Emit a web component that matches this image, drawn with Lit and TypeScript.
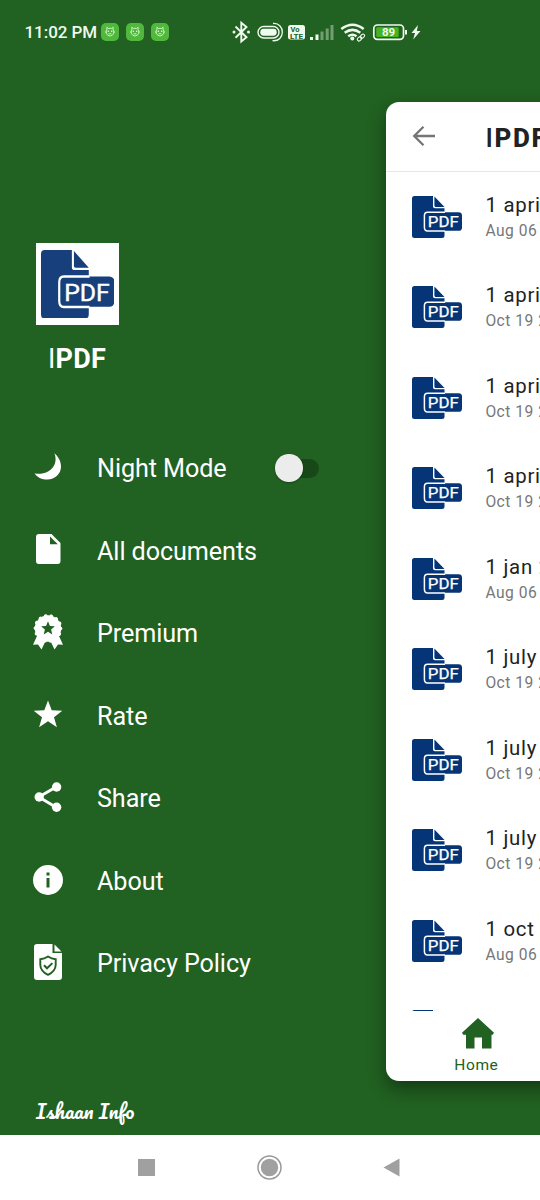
import { LitElement, html, css, svg, nothing } from "lit";
import { customElement, property, state } from "lit/decorators.js";

@customElement("pdf-icon")
class PdfIcon extends LitElement {
  static styles = css`
    :host { display: block; color: #053577; }
    svg { display: block; width: 100%; height: 100%; }
    .label { font: 400 14.5px Roboto, sans-serif; }
  `;
  render() {
    return html`<svg viewBox="0 0 50 42" preserveAspectRatio="none">
      <path fill="currentColor" d="M2.5 0H21V10.5Q21 12.3 23 12.3H32.5V39.5Q32.5 42 30 42H2.5Q0 42 0 39.5V2.5Q0 0 2.5 0ZM22.4 .6L32.5 10.9H23.6Q22.4 10.9 22.4 9.8Z"/>
      <rect x="12.4" y="16.2" width="37.6" height="18.6" rx="3.4" fill="currentColor"/>
      <path fill="none" stroke="#fff" stroke-width="1.5" d="M33 16.2H15.5Q12.4 16.2 12.4 19.8V31.2Q12.4 34.9 15.5 34.9H33"/>
      <text class="label" x="15.8" y="31" textLength="31" lengthAdjust="spacingAndGlyphs" fill="#fff" stroke="#fff" stroke-width=".25">PDF</text>
    </svg>`;
  }
}

const star = "M12 1.6l2.75 7.4 7.85.3-6.15 4.9 2.15 7.6L12 17.4l-6.6 4.4 2.15-7.6L1.4 9.3l7.85-.3z";

const icons: Record<string, unknown> = {
  moon: svg`<path d="M21.4 1.3C24 3.6 28 8 28 14.6C28 22 22 27.6 14.4 27.6C8.6 27.6 4 25.2 1.6 21.2C4 22 7 22 10.4 21.2C18 19.4 22.6 13.6 22.6 7.2C22.6 5 22.2 3 21.4 1.3Z"/>`,
  doc: svg`<path fill-rule="evenodd" d="M6 0H18.5L27.500 9V27Q27.500 30 24.700 30H5.8Q3 30 3 27V3Q3 0 6 0ZM17 2.4V10.2H24.8Z"/>`,
  award: svg`<path d="M4 22L0 30.800l5-.3L8.500 35.500 13 26h4l4.500 9.500 3.500-5 5 .3L26 22z"/>
    <circle cx="15" cy="14.500" r="13.200"/>
    <circle cx="15" cy="14.500" r="12.600" fill="none" stroke="#fff" stroke-width="3.600" stroke-linecap="round" stroke-dasharray=".1 5.555"/>
    <path fill="#216121" d="M15 7.300l1.900 4.600 5 .4-3.800 3.200 1.200 4.900L15 17.800l-4.300 2.600 1.200-4.900-3.800-3.200 5-.4z"/>`,
  star: svg`<g transform="translate(-1.200 -.6) scale(1.350 1.320)"><path d="${star}"/></g>`,
  share: svg`<path d="M23.500 4.800L5.800 15 23.500 25.400" fill="none" stroke="#fff" stroke-width="2.900"/>
    <circle cx="23.600" cy="5" r="4.700"/><circle cx="6.200" cy="15" r="4.700"/><circle cx="23.600" cy="25.200" r="4.700"/>`,
  info: svg`<path fill-rule="evenodd" d="M15 0a15 15 0 1 1 0 30a15 15 0 1 1 0-30ZM13.500 7.500v3h3v-3ZM13.500 13v9.500h3V13Z"/>`,
  privacy: svg`<path d="M5 0H19.500V9H29V33Q29 36 26 36H4Q1 36 1 33V3Q1 0 4 0Z"/><path d="M21.500 .5L28.500 7.500H21.500Z"/>
    <path d="M15 12.500Q18.500 14.800 22.700 15.200V21Q22.400 27.500 15 30.800Q7.600 27.500 7.300 21V15.200Q11.500 14.800 15 12.500Z" fill="none" stroke="#216121" stroke-width="1.900"/>
    <path d="M11 21.300l3 3 5.400-5.200" fill="none" stroke="#216121" stroke-width="2"/>`,
};

interface Entry { icon: string; label: string; h: number; toggle?: boolean; }

@customElement("drawer-menu")
class DrawerMenu extends LitElement {
  @state() private night = false;
  @property({ attribute: false }) entries: Entry[] = [
    { icon: "moon", label: "Night Mode", h: 30, toggle: true },
    { icon: "doc", label: "All documents", h: 30 },
    { icon: "award", label: "Premium", h: 36 },
    { icon: "star", label: "Rate", h: 30 },
    { icon: "share", label: "Share", h: 30 },
    { icon: "info", label: "About", h: 30 },
    { icon: "privacy", label: "Privacy Policy", h: 36 },
  ];
  static styles = css`
    :host { display: flex; flex-direction: column; width: 386px; box-sizing: border-box; padding-top: 178.500px; color: #fff; }
    .logo { width: 82.500px; height: 82.500px; box-sizing: border-box; margin-left: 36px; padding: 7px 4px 7px 4.500px; background: #fff; }
    .logo pdf-icon { width: 73.500px; height: 68.500px; color: #173f7c; }
    .brand { margin: 18px 0 0 48px; font-size: 27px; line-height: 32px; font-weight: 700; letter-spacing: .2px; }
    .thin { font-weight: 400; }
    .menu { display: flex; flex-direction: column; margin-top: 52.800px; }
    .row { display: grid; grid-template-columns: 30px 144px auto; column-gap: 34px; align-items: center; justify-content: start; height: 82.550px; padding-left: 33px; }
    .icon { display: block; width: 30px; overflow: visible; fill: #fff; margin-bottom: 4.600px; }
    .text { font-size: 25.200px; line-height: 32px; letter-spacing: -.09px; white-space: nowrap; }
    .track { display: flex; align-items: center; width: 43.500px; height: 19px; margin-top: -2px; border-radius: 10px; background: #184817; }
    .knob { width: 27.500px; height: 27.500px; flex: none; border-radius: 50%; background: #ececec; box-shadow: 0 1px 2px #0004; }
    .on { justify-content: flex-end; }
    .author { margin: 90px 0 0 36px; font: 400 20px/30px Pacifico, cursive; white-space: nowrap; }
  `;
  render() {
    return html`
      <div class="logo"><pdf-icon></pdf-icon></div>
      <div class="brand"><span class="thin">I</span>PDF</div>
      <nav class="menu">${this.entries.map((e) => html`
        <div class="row">
          <svg class="icon" height=${e.h} viewBox="0 0 30 ${e.h}">${icons[e.icon]}</svg>
          <span class="text">${e.label}</span>
          ${e.toggle ? html`<span class="track ${this.night ? "on" : ""}" @click=${() => (this.night = !this.night)}><span class="knob"></span></span>` : nothing}
        </div>`)}</nav>
      <div class="author">Ishaan Info</div>`;
  }
}

@customElement("file-panel")
class FilePanel extends LitElement {
  @property({ attribute: false }) files = [
    ["1 april", "Aug 06 2"], ["1 april", "Oct 19 2"], ["1 april", "Oct 19 2"], ["1 april", "Oct 19 2"],
    ["1 jan 2", "Aug 06 2"], ["1 july 2", "Oct 19 2"], ["1 july 2", "Oct 19 2"], ["1 july 2", "Oct 19 2"],
    ["1 oct 2", "Aug 06 2"], ["", ""],
  ];
  static styles = css`
    :host { display: flex; flex-direction: column; width: 400px; height: 978.500px; margin-top: 38px; flex: none; overflow: hidden; background: #fff; border-radius: 13px; box-shadow: 0 8px 18px #0006; }
    .head { display: flex; align-items: center; gap: 49px; height: 69px; flex: none; padding-left: 26px; border-bottom: 1.500px solid #e7e7e7; box-sizing: content-box; }
    .head svg { width: 24px; height: 22px; margin-top: -2px; }
    .title { margin-top: 3px; font-size: 26px; font-weight: 800; letter-spacing: 1.700px; color: #222; }
    .medium { font-weight: 500; }
    .list { height: 838.500px; flex: none; overflow: hidden; }
    .file { display: flex; align-items: center; gap: 23.500px; height: 90.500px; padding-left: 25.500px; }
    .file pdf-icon { width: 50px; height: 42px; flex: none; margin-bottom: 1.400px; }
    .names { display: flex; flex-direction: column; margin-top: .5px; white-space: nowrap; }
    .name { font-size: 20.400px; line-height: 26px; letter-spacing: .75px; color: #222; min-height: 26px; }
    .date { font-size: 15.600px; line-height: 26px; letter-spacing: .5px; color: #777; min-height: 26px; }
    .home { display: flex; flex-direction: column; align-items: center; width: 180px; padding-top: 7px; color: #216121; font-size: 15.500px; line-height: 20px; letter-spacing: .6px; }
    .home svg { width: 32px; height: 31px; margin: 0 0 6.500px 3px; }
  `;
  render() {
    return html`
      <header class="head">
        <svg viewBox="0 0 24 22" fill="none" stroke="#757575" stroke-width="2.300"><path d="M23 11H2.500M11.500 1.700L2.200 11l9.300 9.300"/></svg>
        <span class="title"><span class="medium">I</span>PDF</span>
      </header>
      <div class="list">${this.files.map(([n, d]) => html`
        <div class="file"><pdf-icon></pdf-icon><div class="names"><span class="name">${n}</span><span class="date">${d}</span></div></div>`)}
      </div>
      <div class="home">
        <svg viewBox="0 0 32 31" fill="currentColor"><path d="M16 0L32 14.800L30.800 16.800H29.500V30.500H20V19.500H12.500V30.500H4V16.800H1.200L0 14.800Z"/></svg>
        Home
      </div>`;
  }
}

@customElement("status-bar")
class StatusBar extends LitElement {
  static styles = css`
    :host { display: flex; align-items: center; height: 64px; padding-left: 24.500px; color: #f1faef; font-size: 17px; font-weight: 500; }
    .clock { width: 76px; white-space: nowrap; letter-spacing: -.05px; }
    svg { display: block; flex: none; }
    .app { width: 18px; height: 18px; margin-right: 7px; }
    .system { width: 190px; height: 24px; margin-left: 56px; }
    .volte { font: 700 7.500px Roboto, sans-serif; }
    .level { font: 700 11.500px Roboto, sans-serif; }
  `;
  render() {
    const app = html`<svg class="app" viewBox="0 0 18 18"><rect width="18" height="18" rx="5" fill="#4fb83d"/>
      <g fill="none" stroke="#d9f8cc" stroke-width=".9"><path d="M6 6.200L5.800 4.300 7.500 5.500Q9 5 10.500 5.500L12.200 4.300 12 6.200Q13.200 8 12.700 10.300Q11.500 13 9 13Q6.500 13 5.300 10.300Q4.800 8 6 6.200ZM5 9H4M13 9H14M7.500 10.800h3"/></g><circle cx="7.300" cy="8.300" r=".8" fill="#e6ffdc"/><circle cx="10.700" cy="8.300" r=".8" fill="#e6ffdc"/></svg>`;
    return html`<span class="clock">11:02 PM</span>${app}${app}${app}
      <svg class="system" viewBox="232 20 190 24" fill="none" stroke="#f1faef">
        <path d="M235.500 26.500L246.500 37.200 241.300 41.500V22.700L246.500 27 235.500 37.700" stroke-width="1.900"/>
        <circle cx="234" cy="32" r="1.500" fill="#f1faef" stroke="none"/><circle cx="248.500" cy="32" r="1.500" fill="#f1faef" stroke="none"/>
        <rect x="258" y="26.500" width="21" height="11.500" rx="5.700" stroke-width="1.400"/><rect x="260.300" y="28.800" width="16.400" height="6.900" rx="3.400" fill="#f1faef" stroke="none"/>
        <path d="M273 23.500C285.500 22.500 285.500 42 272.500 40.700" stroke-width="1.300"/>
        <rect x="288" y="25" width="17" height="14.500" rx="2.500" fill="#f1faef" stroke="none"/>
        <g stroke="none" fill="#216121"><text class="volte" x="290.500" y="31.500">Vo</text><text class="volte" x="290" y="38.500" textLength="13" lengthAdjust="spacingAndGlyphs">LTE</text></g>
        <g stroke-width="3"><path d="M311.500 37V40M317 34.500V40"/><path d="M322 31.500V40M327.200 28.500V40M332 25V40" opacity=".4"/></g>
        <g stroke-width="2.500"><path d="M341.300 29Q352.500 20.500 363.700 29"/><path d="M344.700 32.800Q352.500 27 360.300 32.800"/><path d="M348.200 36.300Q352.500 33.200 356.500 36.300"/></g>
        <circle cx="352.300" cy="38.500" r="2" fill="#f1faef" stroke="none"/>
        <g stroke-width="1.100" transform="rotate(-42 361 37.500)"><rect x="356.600" y="35.900" width="4.800" height="3.200" rx="1.600"/><rect x="360.500" y="35.900" width="4.800" height="3.200" rx="1.600"/></g>
        <rect x="373.800" y="25" width="29.700" height="14.300" rx="3.500" stroke-width="1.700"/>
        <rect x="376.200" y="27.300" width="22.500" height="9.700" rx="1.200" fill="#45b51e" stroke="none"/>
        <path d="M406 30V34.500" stroke-width="2"/>
        <text class="level" x="382" y="36.400" textLength="13" fill="#f1faef" stroke="none">89</text>
        <path d="M418 25L411.500 33H415L413.200 39.500 420.500 31H416.800Z" fill="#f1faef" stroke="none"/>
      </svg>`;
  }
}

@customElement("app-root")
class AppRoot extends LitElement {
  static styles = css`
    :host { display: flex; flex-direction: column; width: 540px; height: 1200px; overflow: hidden; background: #216121; font-family: Roboto, sans-serif; }
    .main { display: flex; height: 1071px; flex: none; overflow: hidden; }
    drawer-menu { flex: none; }
    file-panel { margin-left: .4px; }
    .nav { display: grid; grid-template-columns: 17px 25px 17px; justify-content: start; align-items: center; column-gap: 102px; height: 65px; flex: none; padding-left: 138px; background: #fff; }
    .nav svg { display: block; overflow: visible; }
  `;
  render() {
    return html`<status-bar></status-bar>
      <div class="main"><drawer-menu></drawer-menu><file-panel></file-panel></div>
      <div class="nav">
        <svg width="17" height="17" fill="#a0a0a0"><rect width="17" height="17"/></svg>
        <svg width="25" height="25" viewBox="0 0 25 25"><circle cx="12.500" cy="12.500" r="11.500" fill="none" stroke="#999" stroke-width="1.500"/><circle cx="12.500" cy="12.500" r="8.700" fill="#a0a0a0"/></svg>
        <svg width="17" height="19" fill="#a0a0a0"><path d="M15.500 .5V18.500L-.5 9.500Z"/></svg>
      </div>`;
  }
}
